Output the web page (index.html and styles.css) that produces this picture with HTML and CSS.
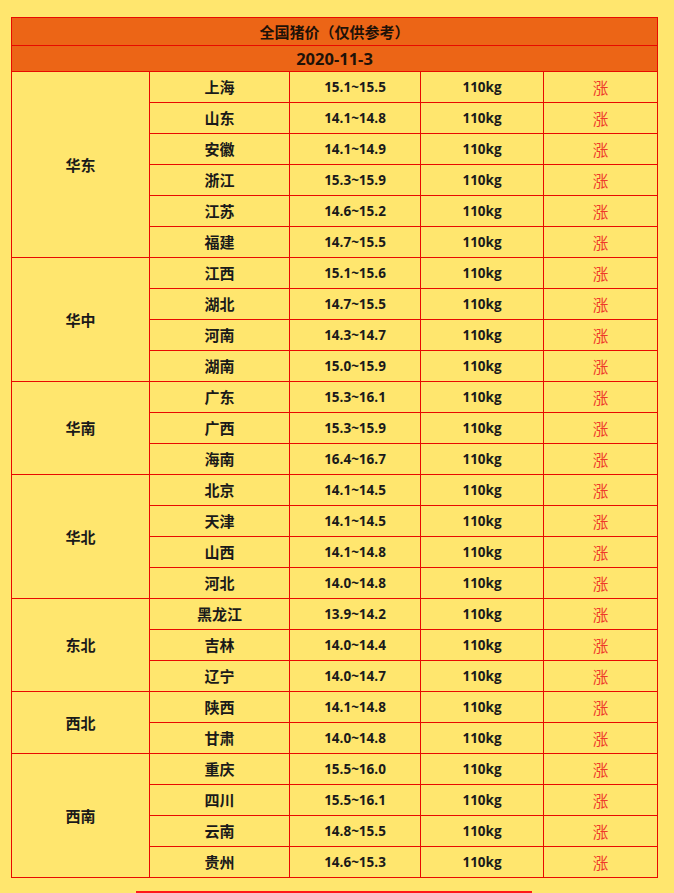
FILE: index.html
```html
<!DOCTYPE html>
<html lang="zh">
<head>
<meta charset="utf-8">
<link rel="stylesheet" href="styles.css">
</head>
<body>
<div class="page">
<table class="price">
  <colgroup>
    <col class="c1"><col class="c2"><col class="c3"><col class="c4"><col class="c5">
  </colgroup>
  <thead>
    <tr class="h1"><th colspan="5">全国猪价（仅供参考）</th></tr>
    <tr class="h2"><th colspan="5">2020-11-3</th></tr>
  </thead>
  <tbody>
    <tr><td rowspan="6" class="region">华东</td><td class="prov">上海</td><td>15.1~15.5</td><td>110kg</td><td class="up">涨</td></tr>
    <tr><td class="prov">山东</td><td>14.1~14.8</td><td>110kg</td><td class="up">涨</td></tr>
    <tr><td class="prov">安徽</td><td>14.1~14.9</td><td>110kg</td><td class="up">涨</td></tr>
    <tr><td class="prov">浙江</td><td>15.3~15.9</td><td>110kg</td><td class="up">涨</td></tr>
    <tr><td class="prov">江苏</td><td>14.6~15.2</td><td>110kg</td><td class="up">涨</td></tr>
    <tr><td class="prov">福建</td><td>14.7~15.5</td><td>110kg</td><td class="up">涨</td></tr>

    <tr><td rowspan="4" class="region">华中</td><td class="prov">江西</td><td>15.1~15.6</td><td>110kg</td><td class="up">涨</td></tr>
    <tr><td class="prov">湖北</td><td>14.7~15.5</td><td>110kg</td><td class="up">涨</td></tr>
    <tr><td class="prov">河南</td><td>14.3~14.7</td><td>110kg</td><td class="up">涨</td></tr>
    <tr><td class="prov">湖南</td><td>15.0~15.9</td><td>110kg</td><td class="up">涨</td></tr>

    <tr><td rowspan="3" class="region">华南</td><td class="prov">广东</td><td>15.3~16.1</td><td>110kg</td><td class="up">涨</td></tr>
    <tr><td class="prov">广西</td><td>15.3~15.9</td><td>110kg</td><td class="up">涨</td></tr>
    <tr><td class="prov">海南</td><td>16.4~16.7</td><td>110kg</td><td class="up">涨</td></tr>

    <tr><td rowspan="4" class="region">华北</td><td class="prov">北京</td><td>14.1~14.5</td><td>110kg</td><td class="up">涨</td></tr>
    <tr><td class="prov">天津</td><td>14.1~14.5</td><td>110kg</td><td class="up">涨</td></tr>
    <tr><td class="prov">山西</td><td>14.1~14.8</td><td>110kg</td><td class="up">涨</td></tr>
    <tr><td class="prov">河北</td><td>14.0~14.8</td><td>110kg</td><td class="up">涨</td></tr>

    <tr><td rowspan="3" class="region">东北</td><td class="prov">黑龙江</td><td>13.9~14.2</td><td>110kg</td><td class="up">涨</td></tr>
    <tr><td class="prov">吉林</td><td>14.0~14.4</td><td>110kg</td><td class="up">涨</td></tr>
    <tr><td class="prov">辽宁</td><td>14.0~14.7</td><td>110kg</td><td class="up">涨</td></tr>

    <tr><td rowspan="2" class="region">西北</td><td class="prov">陕西</td><td>14.1~14.8</td><td>110kg</td><td class="up">涨</td></tr>
    <tr><td class="prov">甘肃</td><td>14.0~14.8</td><td>110kg</td><td class="up">涨</td></tr>

    <tr><td rowspan="4" class="region">西南</td><td class="prov">重庆</td><td>15.5~16.0</td><td>110kg</td><td class="up">涨</td></tr>
    <tr><td class="prov">四川</td><td>15.5~16.1</td><td>110kg</td><td class="up">涨</td></tr>
    <tr><td class="prov">云南</td><td>14.8~15.5</td><td>110kg</td><td class="up">涨</td></tr>
    <tr><td class="prov">贵州</td><td>14.6~15.3</td><td>110kg</td><td class="up">涨</td></tr>
  </tbody>
</table>
<div class="rule"></div>
</div>
</body>
</html>
```

FILE: styles.css
```css
html, body {
  margin: 0;
  padding: 0;
  background: #ffe66e;
}
body {
  font-family: "Open Sans", "Noto Sans CJK SC", sans-serif;
  color: #1a1a1a;
}
.page {
  padding: 17px 0 0 11px;
}
.price {
  border-collapse: collapse;
  table-layout: fixed;
  width: 646px;
}
.c1 { width: 138px; }
.c2 { width: 140px; }
.c3 { width: 131px; }
.c4 { width: 123px; }
.c5 { width: 114px; }
.price th, .price td {
  border: 1px solid #e80a00;
  text-align: center;
  padding: 0;
  font-size: 13.5px;
  font-weight: 700;
  line-height: 18px;
}
.price th {
  background: #ec6516;
  color: #1e1208;
}
.h1 th { height: 27px; font-size: 15px; font-family: "Noto Sans CJK SC", sans-serif; }
.h2 th { height: 25px; font-size: 16.5px; }
.price td { height: 30px; }
.price td.prov { font-size: 15px; font-family: "Noto Sans CJK SC", sans-serif; }
.price td.region { font-size: 15px; font-family: "Noto Sans CJK SC", sans-serif; }
.price td.up {
  color: #ee3a2a;
  font-weight: 400;
  font-size: 15.5px;
  font-family: "Noto Sans CJK SC", sans-serif;
}
.rule {
  margin: 13px 0 0 125px;
  width: 396px;
  height: 2px;
  background: #ff1a1a;
}
```
